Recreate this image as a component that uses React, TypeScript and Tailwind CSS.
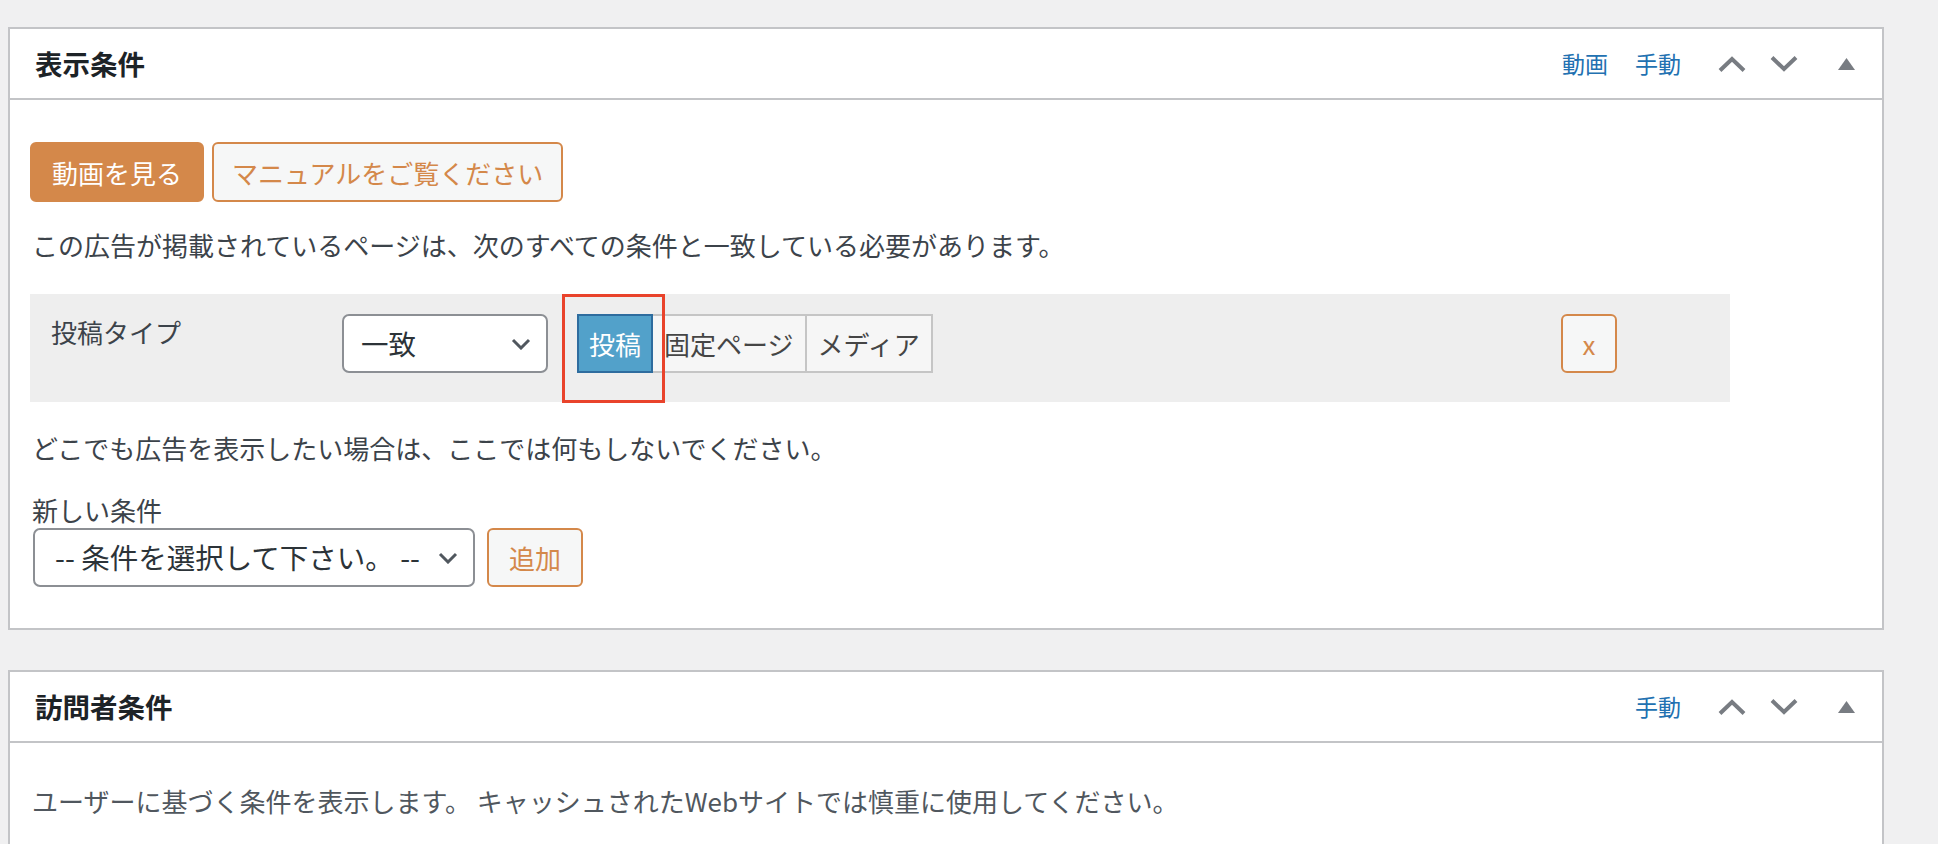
import React from 'react';

const ChevronUp = () => (
  <svg width="28" height="16" viewBox="0 0 28 16" fill="none">
    <path d="M2 14.5 L14 3 L26 14.5" stroke="#787c82" strokeWidth="4" />
  </svg>
);

const ChevronDown = () => (
  <svg width="28" height="16" viewBox="0 0 28 16" fill="none">
    <path d="M2 1.5 L14 13 L26 1.5" stroke="#787c82" strokeWidth="4" />
  </svg>
);

const Triangle = () => (
  <svg width="17" height="12" viewBox="0 0 17 12">
    <polygon points="8.5,0 17,12 0,12" fill="#787c82" />
  </svg>
);

const SelectChevron = () => (
  <svg width="20" height="12" viewBox="0 0 20 12" fill="none">
    <path d="M2 2 L10 10 L18 2" stroke="#50575e" strokeWidth="3" />
  </svg>
);

const PanelHeader: React.FC<{ title: string; video?: boolean }> = ({ title, video }) => (
  <div className="flex h-[71px] items-center border-b-2 border-[#c3c4c7] pl-[25px] pr-[27px]">
    <h2 className="text-[27.5px] font-bold leading-none text-[#1d2327]">{title}</h2>
    <div className="ml-auto flex items-center">
      {video && <a className="mr-[27px] text-[23px] leading-none text-[#2271b1]">動画</a>}
      <a className="text-[23px] leading-none text-[#2271b1]">手動</a>
      <span className="ml-[37px] flex"><ChevronUp /></span>
      <span className="ml-[24px] flex"><ChevronDown /></span>
      <span className="ml-[40px] flex"><Triangle /></span>
    </div>
  </div>
);

const outlineBtn =
  'flex h-[59px] items-center rounded-[6px] border-2 border-[#d4884a] bg-[#f6f7f7] text-[26px] text-[#d4884a]';

const App: React.FC = () => {
  return (
    <div className="min-h-screen bg-[#f0f0f1] pl-[8px] pt-[27px] font-['Noto_Sans_CJK_JP',sans-serif] text-[#3c434a]">
      {/* 表示条件 */}
      <div className="w-[1876px] border-2 border-[#c3c4c7] bg-white">
        <PanelHeader title="表示条件" video />
        <div className="px-[20px] pb-[41px] pt-[42px]">
          <div className="flex gap-[8px]">
            <button className="flex h-[60px] items-center rounded-[6px] border-2 border-[#d4884a] bg-[#d4884a] px-[20px] text-[26px] text-white">
              動画を見る
            </button>
            <button className="flex h-[60px] items-center rounded-[6px] border-2 border-[#d4884a] bg-[#f6f7f7] px-[18px] text-[26px] text-[#d4884a]">
              マニュアルをご覧ください
            </button>
          </div>

          <p className="mt-[24px] pl-[2px] text-[26px] leading-[38px]">
            この広告が掲載されているページは、次のすべての条件と一致している必要があります。
          </p>

          <div className="mt-[30px] grid h-[108px] w-[1700px] grid-cols-[312px_1219px_56px] items-start bg-[#eeeeee] pt-[20px]">
            <div className="pl-[21px] text-[26px] leading-[36px]">投稿タイプ</div>
            <div className="flex items-start">
              <div className="flex h-[59px] w-[206px] items-center justify-between rounded-[7px] border-2 border-[#8c8f94] bg-white pl-[17px] pr-[15px] text-[27.5px] text-[#2c3338]">
                <span>一致</span>
                <SelectChevron />
              </div>
              <div className="ml-[29px] flex">
                <div className="relative">
                  <button className="flex h-[59px] items-center border-2 border-[#2e6c9e] bg-[#52a1ca] px-[10px] text-[26px] text-white">
                    投稿
                  </button>
                  <div className="pointer-events-none absolute -left-[15px] -top-[20px] h-[109px] w-[103px] border-[3px] border-[#e9432b]" />
                </div>
                <button className="flex h-[59px] items-center border-2 border-l-0 border-[#c5c5c5] bg-[#f6f6f6] px-[11px] text-[26px] text-[#454545]">
                  固定ページ
                </button>
                <button className="flex h-[59px] items-center border-2 border-l-0 border-[#c5c5c5] bg-[#f6f6f6] px-[11px] text-[26px] text-[#454545]">
                  メディア
                </button>
              </div>
            </div>
            <button className={`${outlineBtn} w-[56px] justify-center`}>x</button>
          </div>

          <p className="mt-[27px] pl-[2px] text-[26px] leading-[38px]">
            どこでも広告を表示したい場合は、ここでは何もしないでください。
          </p>

          <div className="mt-[25px] pl-[2px] text-[26px] leading-[36px]">新しい条件</div>
          <div className="flex items-start gap-[12px] pl-[3px]">
            <div className="flex h-[59px] w-[442px] items-center justify-between rounded-[7px] border-2 border-[#8c8f94] bg-white pl-[20px] pr-[15px] text-[28.5px] text-[#2c3338]">
              <span>-- 条件を選択して下さい。 --</span>
              <SelectChevron />
            </div>
            <button className={`${outlineBtn} px-[20px]`}>追加</button>
          </div>
        </div>
      </div>

      {/* 訪問者条件 */}
      <div className="mt-[40px] w-[1876px] border-2 border-[#c3c4c7] bg-white">
        <PanelHeader title="訪問者条件" />
        <div className="h-[200px] px-[20px] pt-[39px]">
          <p className="pl-[2px] text-[26px] leading-[38px] text-[#50575e]">
            ユーザーに基づく条件を表示します。 キャッシュされたWebサイトでは慎重に使用してください。
          </p>
        </div>
      </div>
    </div>
  );
};

export default App;
